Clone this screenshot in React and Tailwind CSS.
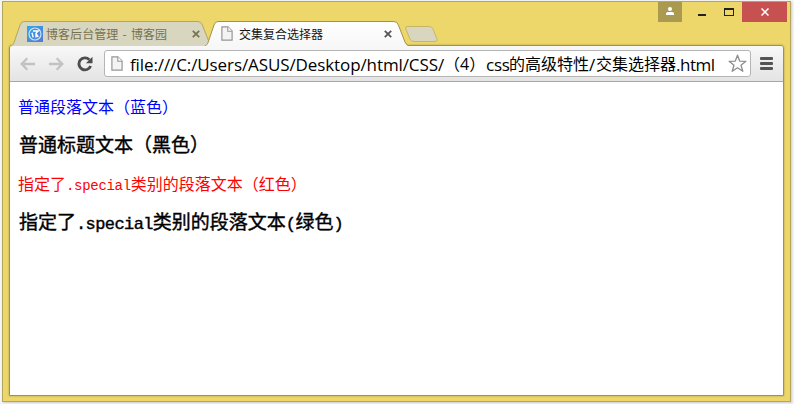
function FileIcon() {
  return (
    <svg width="12" height="15" viewBox="0 0 12 15" className="block shrink-0">
      <path d="M.9.8h6l4.2 4.3v9.1H.9z" fill="#f4f4f4" stroke="#969696" strokeWidth="1.2" />
      <path d="M6.8.8v4.4h4.3" fill="#fff" stroke="#969696" strokeWidth="1.1" />
    </svg>
  );
}

function TabClose({ color }) {
  return (
    <svg width="8" height="8" viewBox="0 0 8 8" className="block shrink-0">
      <path d="M.8.8l6.4 6.4M7.2.8L.8 7.2" stroke={color} strokeWidth="1.8" />
    </svg>
  );
}

function BlogIcon() {
  return (
    <svg width="16" height="16" viewBox="0 0 16 16" className="block shrink-0">
      <defs>
        <linearGradient id="blogIcon" x1="0" y1="0" x2="1" y2="1">
          <stop offset="0" stopColor="#30a8e8" />
          <stop offset="1" stopColor="#5578d8" />
        </linearGradient>
      </defs>
      <rect width="16" height="16" fill="url(#blogIcon)" />
      <circle cx="8" cy="8" r="6" fill="none" stroke="#cfe0f0" strokeWidth="1.2" />
      <path d="M6 5h5.2L9 7.2V11.4M5 6.8l1.2 4.6M9.2 8l2 3" fill="none" stroke="#fff" strokeWidth="1.4" />
    </svg>
  );
}

function Tab({ active, icon, title }) {
  return (
    <div className={active ? "relative z-10 -ml-[8px] h-[25px] w-[204px]" : "relative h-[25px] w-[202px]"}>
      <svg width="204" height="25" viewBox="0 0 204 25" className="absolute left-0 top-0">
        <defs>
          <linearGradient id="activeTab" x1="0" y1="0" x2="0" y2="1">
            <stop offset="0" stopColor="#ffffff" />
            <stop offset="1" stopColor="#f7f7f7" />
          </linearGradient>
        </defs>
        <path
          d={active ? "M0 25C2 24 2.5 23 3.2 21L9 4Q10.2.5 13 .5H189Q192 .5 193.4 4L200 21Q201 24 204 25" : "M0 25C2 24 2.5 23 3.2 21L9 4Q10.2.5 13 .5H187Q190 .5 191.4 4L198 21Q199 24 202 25"}
          fill={active ? "url(#activeTab)" : "#d8d6bf"}
          stroke={active ? "#a2924d" : "#b4a566"}
        />
      </svg>
      <div className={active ? "relative flex h-[25px] items-center pl-[16px] pr-[17px]" : "relative flex h-[25px] items-center pl-[16px] pr-[13px]"}>
        {icon}
        <span className={active ? "ml-[6px] grow whitespace-nowrap text-[12px] leading-[25px] text-[#151515]" : "ml-[3px] grow whitespace-nowrap text-[12px] leading-[25px] tracking-[0.05px] text-[#777152] [word-spacing:1.5px]"}>
          {title}
        </span>
        <TabClose color={active ? "#555555" : "#777354"} />
      </div>
    </div>
  );
}

function WindowControls() {
  return (
    <div className="ml-auto mr-[3px] flex h-[20px] items-start">
      <div className="flex h-[20px] w-[24px] items-center justify-center bg-[#a99a50]">
        <svg width="8" height="8" viewBox="0 0 8 8" className="-mt-[2px]">
          <circle cx="4" cy="2.1" r="2" fill="#fff" />
          <path d="M0 8V6.5Q0 5 2 5H6Q8 5 8 6.5V8z" fill="#fff" />
        </svg>
      </div>
      <div className="ml-[16px] mt-[12px] h-[2px] w-[8px] bg-[#222]" />
      <div className="ml-[18px] mt-[6px] h-[8px] w-[10px] border border-t-2 border-[#222]" />
      <div className="ml-[8px] flex h-[20px] w-[45px] items-center justify-center bg-[#c75050]">
        <svg width="8" height="8" viewBox="0 0 8 8">
          <path d="M.5.5l7 7M7.5.5l-7 7" stroke="#fff" strokeWidth="1.5" />
        </svg>
      </div>
    </div>
  );
}

function Toolbar() {
  return (
    <div className="flex h-[36px] shrink-0 items-center border-b border-[#a7a7a7] bg-linear-to-b from-[#f8f8f8] to-[#e4e4e4] pl-[10px]">
      <svg width="16" height="14" viewBox="0 0 16 14" fill="none" stroke="#c2c2c2" strokeWidth="2.3">
        <path d="M15 7H2M7.3 1.3L1.7 7l5.6 5.7" />
      </svg>
      <svg width="16" height="14" viewBox="0 0 16 14" fill="none" stroke="#c2c2c2" strokeWidth="2.3" className="ml-[12px]">
        <path d="M1 7h13M8.7 1.3L14.3 7l-5.6 5.7" />
      </svg>
      <svg width="16" height="16" viewBox="0 0 16 16" className="ml-[13px]">
        <path d="M12.3 3.7A6 6 0 1 0 13.6 10" fill="none" stroke="#4e4e4e" strokeWidth="2.9" />
        <path d="M15.5.7v6.6H8.9z" fill="#4e4e4e" />
      </svg>
      <div className="ml-[11px] flex h-[27px] w-[647px] items-center rounded-[3px] border border-[#b5b5b5] bg-white pl-[6px] pr-[3px]">
        <FileIcon />
        <div className="ml-[7px] flex grow whitespace-nowrap pt-px font-['Open_Sans','Noto_Sans_CJK_SC',sans-serif] text-[17px] leading-[25px] text-black">
          <span className="w-[314px] tracking-[-0.1px]">file:///C:/Users/ASUS/Desktop/html/CSS/</span>
          <span className="w-[42px] text-[16px]">（4）</span>
          <span className="w-[23px] tracking-[-0.2px]">css</span>
          <span className="w-[80px] text-[16px]">的高级特性</span>
          <span className="w-[7px]">/</span>
          <span className="w-[80px] text-[16px]">交集选择器</span>
          <span className="tracking-[-0.5px]">.html</span>
        </div>
        <svg width="19" height="19" viewBox="0 0 19 19" className="shrink-0">
          <path d="M9.5 1.2l2.2 5.9 6.2.2-4.9 3.9 1.8 6.1-5.3-3.5-5.3 3.5L6 11.2 1.1 7.3l6.2-.2z" fill="#fff" stroke="#8e8e8e" strokeWidth="1.3" strokeLinejoin="round" />
        </svg>
      </div>
      <div className="ml-[9px] flex w-[13px] flex-col gap-[2px]">
        <div className="h-[3px] rounded-[1px] bg-[#555]" />
        <div className="h-[3px] rounded-[1px] bg-[#555]" />
        <div className="h-[3px] rounded-[1px] bg-[#555]" />
      </div>
    </div>
  );
}

function PageContent() {
  return (
    <main className="grow bg-white pl-[8px] pt-[15px] font-['Liberation_Mono','Noto_Sans_CJK_SC',monospace] text-[16px] text-black">
      <p className="h-[24px] whitespace-nowrap leading-[24px] text-[#0000ff]">普通段落文本（蓝色）</p>
      <h3 className="mt-[13px] h-[26px] whitespace-nowrap pl-px text-[19px] leading-[26px] [-webkit-text-stroke:0.4px_black]">普通标题文本（黑色）</h3>
      <p className="mt-[14px] h-[24px] whitespace-nowrap leading-[24px] text-[#ff0000]">
        指定了<span className="text-[14px] tracking-[-0.3px]">.special</span>类别的段落文本（红色）
      </p>
      <h3 className="mt-[13px] h-[26px] whitespace-nowrap pl-px text-[19px] leading-[26px] [-webkit-text-stroke:0.4px_black]">
        指定了<span className="text-[17px] tracking-[-0.6px]">.special</span>类别的段落文本<span className="text-[17px] tracking-[-0.5px]">(</span>绿色<span className="text-[17px]">)</span>
      </h3>
    </main>
  );
}

export default function App() {
  return (
    <div className="h-[404px] w-[794px] overflow-hidden bg-[#f5f5f5] pl-[2px] pt-[1px] font-['Noto_Sans_CJK_SC',sans-serif]">
      <div className="flex h-[401px] w-[789px] flex-col border border-[#b3a55a] bg-[#edd76b] shadow-[1px_1px_2px_#cccccc]">
        <div className="flex h-[20px] shrink-0">
          <WindowControls />
        </div>
        <div className="-mt-px flex h-[24px] shrink-0 pl-[8px]">
          <Tab icon={<BlogIcon />} title="博客后台管理 - 博客园" />
          <Tab active icon={<FileIcon />} title="交集复合选择器" />
          <svg width="35" height="16" viewBox="0 0 35 16" className="-ml-[4px] mt-[5px]">
            <path d="M2 .5H24Q27 .5 28 3L32 13Q33 15.5 30 15.5H9Q6 15.5 5 13L.8 3Q0 .5 2 .5z" fill="#d8d6bf" stroke="#c8b668" />
          </svg>
        </div>
        <div className="mx-[6px] flex h-[351px] shrink-0 flex-col overflow-hidden rounded-t-[3px] border border-[#a2924d] shadow-[0_0_2px_#a2924d]">
          <Toolbar />
          <PageContent />
        </div>
      </div>
    </div>
  );
}
